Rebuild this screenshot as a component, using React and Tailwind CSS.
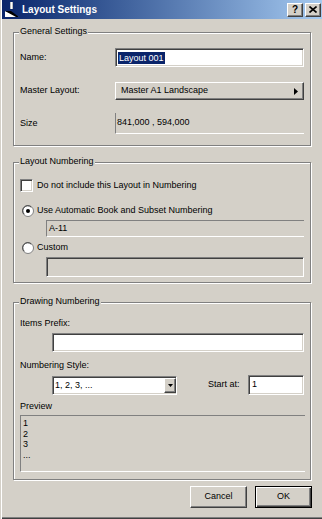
import React from 'react';

const sunken =
    'border border-t-[#808080] border-l-[#808080] border-b-white border-r-white shadow-[inset_1px_1px_0_#404040,inset_-1px_-1px_0_#d4d0c8]';
const raised =
    'border border-t-white border-l-white border-b-[#404040] border-r-[#404040] shadow-[inset_-1px_-1px_0_#808080,inset_1px_1px_0_#d4d0c8]';

const Group = ({ label, className, children }) => (
    <div className={`relative w-[298px] border border-[#808080] shadow-[inset_1px_1px_0_#fff,1px_1px_0_#fff] ${className}`}>
        <span className="absolute left-[5px] top-[-8px] px-[1px] bg-[#d4d0c8] leading-[12px]">{label}</span>
        {children}
    </div>
);

const Radio = ({ checked }) => (
    <svg width="12" height="12" viewBox="0 0 12 12" className="shrink-0">
        <circle cx="6" cy="6" r="5.5" fill="#fff" stroke="#808080" />
        <path d="M2.2 9.2 A4.6 4.6 0 0 1 9.2 2.2" fill="none" stroke="#404040" />
        {checked && <circle cx="6" cy="6" r="2" fill="#000" />}
    </svg>
);

const TitleIcon = () => (
    <svg width="16" height="16" viewBox="0 0 16 16" className="shrink-0">
        <rect x="6" y="0" width="3" height="7" fill="#c0c0c0" />
        <rect x="7" y="0" width="1" height="7" fill="#fff" />
        <polygon points="1,9 15,15 1,15" fill="#fff" />
        <polygon points="1,9 7,9 15,15 12,15" fill="#000" />
    </svg>
);

export default function App() {
    return (
        <div className="relative w-[322px] h-[519px] bg-[#d4d0c8] text-black text-[9px] font-['Liberation_Sans',Arial,sans-serif] shadow-[inset_1px_0_0_#d4d0c8,inset_2px_0_0_#fff,inset_0_-1px_0_#404040,inset_0_-2px_0_#808080] overflow-hidden">
            {/* Title bar */}
            <div className="ml-[2px] h-[19px] flex items-center bg-gradient-to-r from-[#0a246a] to-[#a6caf0] pl-[2px] pr-[1px]">
                <TitleIcon />
                <span className="ml-[2px] text-white font-bold text-[10px] leading-[12px]">Layout Settings</span>
                <div className="ml-auto flex gap-[2px]">
                    <div className={`w-[16px] h-[14px] bg-[#d4d0c8] flex items-center justify-center font-bold text-[10px] leading-none ${raised}`}>?</div>
                    <div className={`w-[16px] h-[14px] bg-[#d4d0c8] flex items-center justify-center ${raised}`}>
                        <svg width="8" height="7" viewBox="0 0 8 7">
                            <path d="M0.5 0.5 L7.5 6.5 M7.5 0.5 L0.5 6.5" stroke="#000" strokeWidth="1.6" />
                        </svg>
                    </div>
                </div>
            </div>

            <div className="pl-[13px] flex flex-col">
                {/* General Settings */}
                <Group label="General Settings" className="mt-[13px] h-[114px] pt-[15px] pl-[6px] pr-[6px]">
                    <div className="flex items-center h-[19px]">
                        <span className="w-[95px]">Name:</span>
                        <div className={`flex-1 h-[19px] bg-white flex items-center pl-[2px] ${sunken}`}>
                            <span className="bg-[#0a246a] text-white leading-[12px] px-[1px]">Layout 001</span>
                        </div>
                    </div>
                    <div className="flex items-center h-[18px] mt-[15px]">
                        <span className="w-[95px]">Master Layout:</span>
                        <div className={`flex-1 h-[18px] flex items-center pl-[5px] pr-[5px] ${raised}`}>
                            <span>Master A1 Landscape</span>
                            <svg width="4" height="7" viewBox="0 0 4 7" className="ml-auto">
                                <polygon points="0,0 4,3.5 0,7" fill="#000" />
                            </svg>
                        </div>
                    </div>
                    <div className="flex items-center h-[21px] mt-[13px]">
                        <span className="w-[95px]">Size</span>
                        <div className="flex-1 h-[21px] flex items-center pl-[1px] border-l border-l-[#808080] border-b border-b-white">
                            <span>841,000 , 594,000</span>
                        </div>
                    </div>
                </Group>

                {/* Layout Numbering */}
                <Group label="Layout Numbering" className="mt-[16px] h-[121px] pt-[16px] pl-[6px] pr-[6px]">
                    <div className="flex items-center h-[13px] gap-[4px]">
                        <div className={`w-[13px] h-[13px] bg-white ${sunken}`}></div>
                        <span>Do not include this Layout in Numbering</span>
                    </div>
                    <div className="flex items-center h-[12px] mt-[13px] ml-[2px] gap-[3px]">
                        <Radio checked />
                        <span>Use Automatic Book and Subset Numbering</span>
                    </div>
                    <div className="ml-[26px] mt-[3px] h-[17px] flex items-center pl-[2px] border-t border-t-[#808080] border-l border-l-[#808080] border-b border-b-white">
                        <span>A-11</span>
                    </div>
                    <div className="flex items-center h-[12px] mt-[5px] ml-[2px] gap-[3px]">
                        <Radio />
                        <span>Custom</span>
                    </div>
                    <div className={`ml-[26px] mt-[3px] h-[20px] ${sunken}`}></div>
                </Group>

                {/* Drawing Numbering */}
                <Group label="Drawing Numbering" className="mt-[19px] h-[178px] pt-[14px] pl-[6px] pr-[6px]">
                    <div className="h-[13px] leading-[13px]">Items Prefix:</div>
                    <div className={`ml-[32px] mt-[3px] h-[19px] bg-white ${sunken}`}></div>
                    <div className="mt-[7px] h-[13px] leading-[13px]">Numbering Style:</div>
                    <div className="mt-[3px] h-[20px] flex items-start">
                        <div className={`ml-[32px] mt-[1px] w-[125px] h-[19px] bg-white flex items-center pl-[2px] ${sunken}`}>
                            <span>1, 2, 3, ...</span>
                            <div className={`ml-auto w-[12px] h-[15px] bg-[#d4d0c8] flex items-center justify-center ${raised}`}>
                                <svg width="5" height="3" viewBox="0 0 5 3">
                                    <polygon points="0,0 5,0 2.5,3" fill="#000" />
                                </svg>
                            </div>
                        </div>
                        <span className="ml-[31px] self-center">Start at:</span>
                        <div className={`ml-auto w-[56px] h-[20px] bg-white flex items-center pl-[3px] ${sunken}`}>
                            <span>1</span>
                        </div>
                    </div>
                    <div className="mt-[5px] h-[13px] leading-[13px]">Preview</div>
                    <div className="mt-[2px] mr-[-1px] h-[57px] pl-[2px] pt-[2px] leading-[10.5px] border-t border-t-[#808080] border-l border-l-[#808080] border-b border-b-white">
                        <div>1</div>
                        <div>2</div>
                        <div>3</div>
                        <div>...</div>
                    </div>
                </Group>

                {/* Buttons */}
                <div className="mt-[6px] w-[299px] flex justify-end gap-[8px]">
                    <div className={`w-[57px] h-[22px] flex items-center justify-center ${raised}`}>Cancel</div>
                    <div className="w-[57px] h-[22px] flex items-center justify-center border border-black shadow-[inset_1px_1px_0_#fff,inset_-1px_-1px_0_#404040,inset_-2px_-2px_0_#808080]">OK</div>
                </div>
            </div>
        </div>
    );
}
